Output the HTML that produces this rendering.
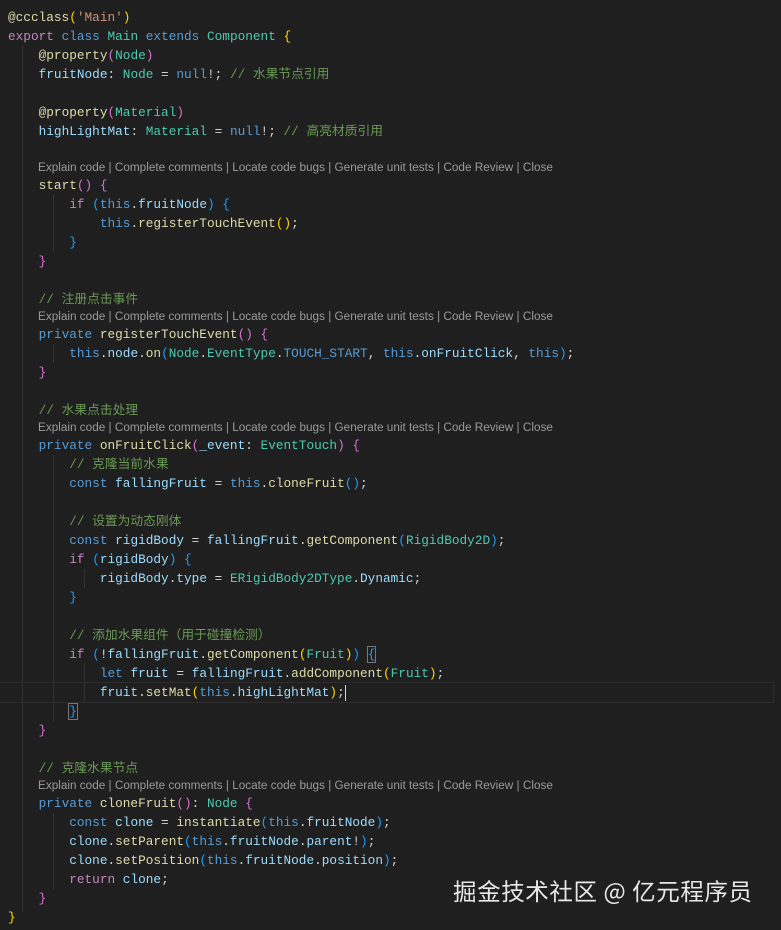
<!DOCTYPE html>
<html><head><meta charset="utf-8"><style>
html,body{margin:0;padding:0;background:#1f1f1f;}
body{width:781px;height:930px;overflow:hidden;position:relative;}
#code{position:absolute;left:8px;top:8px;font-family:"Liberation Mono","Noto Sans CJK SC",monospace;font-size:12.75px;color:#d4d4d4;}
.l{height:19px;line-height:19px;white-space:pre;}
.c{height:16px;line-height:16px;white-space:pre;font-family:"Liberation Sans",sans-serif;font-size:11.75px;color:#9a9a9a;padding-left:30px;}
.k{color:#569cd6}.p{color:#c586c0}.t{color:#4ec9b0}.v{color:#9cdcfe}.f{color:#dcdcaa}.cm{color:#6a9955}.s{color:#ce9178}
.b1{color:#ffd700}.b2{color:#da70d6}.b3{color:#179fff}
.g{position:absolute;width:1px;background:#343434;}
.wm{position:absolute;left:453px;top:873px;font-family:"Noto Sans CJK SC","Liberation Sans",sans-serif;font-size:23.5px;color:#e8e8e8;letter-spacing:0.6px;}
.cur{outline:1px solid #2c2c2c;}
</style></head><body>
<div class="g" style="left:22px;top:46px;height:866px"></div>
<div class="g" style="left:53px;top:195px;height:57px"></div>
<div class="g" style="left:53px;top:344px;height:19px"></div>
<div class="g" style="left:53px;top:455px;height:266px"></div>
<div class="g" style="left:84px;top:569px;height:19px"></div>
<div class="g" style="left:84px;top:664px;height:38px"></div>
<div class="g" style="left:53px;top:813px;height:76px"></div>
<div id="code">
<div class="l"><span class="f">@ccclass</span><span class="b1">(</span><span class="s">'Main'</span><span class="b1">)</span></div>
<div class="l"><span class="p">export</span> <span class="k">class</span> <span class="t">Main</span> <span class="k">extends</span> <span class="t">Component</span> <span class="b1">{</span></div>
<div class="l">    <span class="f">@property</span><span class="b2">(</span><span class="t">Node</span><span class="b2">)</span></div>
<div class="l">    <span class="v">fruitNode</span>: <span class="t">Node</span> = <span class="k">null</span>!; <span class="cm">// 水果节点引用</span></div>
<div class="l"> </div>
<div class="l">    <span class="f">@property</span><span class="b2">(</span><span class="t">Material</span><span class="b2">)</span></div>
<div class="l">    <span class="v">highLightMat</span>: <span class="t">Material</span> = <span class="k">null</span>!; <span class="cm">// 高亮材质引用</span></div>
<div class="l"> </div>
<div class="c">Explain code | Complete comments | Locate code bugs | Generate unit tests | Code Review | Close</div>
<div class="l">    <span class="f">start</span><span class="b2">()</span> <span class="b2">{</span></div>
<div class="l">        <span class="p">if</span> <span class="b3">(</span><span class="k">this</span>.<span class="v">fruitNode</span><span class="b3">)</span> <span class="b3">{</span></div>
<div class="l">            <span class="k">this</span>.<span class="f">registerTouchEvent</span><span class="b1">()</span>;</div>
<div class="l">        <span class="b3">}</span></div>
<div class="l">    <span class="b2">}</span></div>
<div class="l"> </div>
<div class="l">    <span class="cm">// 注册点击事件</span></div>
<div class="c">Explain code | Complete comments | Locate code bugs | Generate unit tests | Code Review | Close</div>
<div class="l">    <span class="k">private</span> <span class="f">registerTouchEvent</span><span class="b2">()</span> <span class="b2">{</span></div>
<div class="l">        <span class="k">this</span>.<span class="v">node</span>.<span class="f">on</span><span class="b3">(</span><span class="t">Node</span>.<span class="t">EventType</span>.<span class="k">TOUCH_START</span>, <span class="k">this</span>.<span class="v">onFruitClick</span>, <span class="k">this</span><span class="b3">)</span>;</div>
<div class="l">    <span class="b2">}</span></div>
<div class="l"> </div>
<div class="l">    <span class="cm">// 水果点击处理</span></div>
<div class="c">Explain code | Complete comments | Locate code bugs | Generate unit tests | Code Review | Close</div>
<div class="l">    <span class="k">private</span> <span class="f">onFruitClick</span><span class="b2">(</span><span class="v">_event</span>: <span class="t">EventTouch</span><span class="b2">)</span> <span class="b2">{</span></div>
<div class="l">        <span class="cm">// 克隆当前水果</span></div>
<div class="l">        <span class="k">const</span> <span class="v">fallingFruit</span> = <span class="k">this</span>.<span class="f">cloneFruit</span><span class="b3">()</span>;</div>
<div class="l"> </div>
<div class="l">        <span class="cm">// 设置为动态刚体</span></div>
<div class="l">        <span class="k">const</span> <span class="v">rigidBody</span> = <span class="v">fallingFruit</span>.<span class="f">getComponent</span><span class="b3">(</span><span class="t">RigidBody2D</span><span class="b3">)</span>;</div>
<div class="l">        <span class="p">if</span> <span class="b3">(</span><span class="v">rigidBody</span><span class="b3">)</span> <span class="b3">{</span></div>
<div class="l">            <span class="v">rigidBody</span>.<span class="v">type</span> = <span class="t">ERigidBody2DType</span>.<span class="v">Dynamic</span>;</div>
<div class="l">        <span class="b3">}</span></div>
<div class="l"> </div>
<div class="l">        <span class="cm">// 添加水果组件（用于碰撞检测）</span></div>
<div class="l">        <span class="p">if</span> <span class="b3">(</span>!<span class="v">fallingFruit</span>.<span class="f">getComponent</span><span class="b1">(</span><span class="t">Fruit</span><span class="b1">)</span><span class="b3">)</span> <span class="b3" style="outline:1px solid #777">{</span></div>
<div class="l">            <span class="k">let</span> <span class="v">fruit</span> = <span class="v">fallingFruit</span>.<span class="f">addComponent</span><span class="b1">(</span><span class="t">Fruit</span><span class="b1">)</span>;</div>
<div class="l cur" style="width:773px;margin-left:-8px;padding-left:8px;box-sizing:border-box">            <span class="v">fruit</span>.<span class="f">setMat</span><span class="b1">(</span><span class="k">this</span>.<span class="v">highLightMat</span><span class="b1">)</span>;<span style="display:inline-block;width:1px;height:16px;background:#d4d4d4;vertical-align:middle"></span></div>
<div class="l">        <span class="b3" style="outline:1px solid #777">}</span></div>
<div class="l">    <span class="b2">}</span></div>
<div class="l"> </div>
<div class="l">    <span class="cm">// 克隆水果节点</span></div>
<div class="c">Explain code | Complete comments | Locate code bugs | Generate unit tests | Code Review | Close</div>
<div class="l">    <span class="k">private</span> <span class="f">cloneFruit</span><span class="b2">()</span>: <span class="t">Node</span> <span class="b2">{</span></div>
<div class="l">        <span class="k">const</span> <span class="v">clone</span> = <span class="f">instantiate</span><span class="b3">(</span><span class="k">this</span>.<span class="v">fruitNode</span><span class="b3">)</span>;</div>
<div class="l">        <span class="v">clone</span>.<span class="f">setParent</span><span class="b3">(</span><span class="k">this</span>.<span class="v">fruitNode</span>.<span class="v">parent</span>!<span class="b3">)</span>;</div>
<div class="l">        <span class="v">clone</span>.<span class="f">setPosition</span><span class="b3">(</span><span class="k">this</span>.<span class="v">fruitNode</span>.<span class="v">position</span><span class="b3">)</span>;</div>
<div class="l">        <span class="p">return</span> <span class="v">clone</span>;</div>
<div class="l">    <span class="b2">}</span></div>
<div class="l"><span class="b1">}</span></div>
</div>
<div class="wm">掘金技术社区 @ 亿元程序员</div>
</body></html>
